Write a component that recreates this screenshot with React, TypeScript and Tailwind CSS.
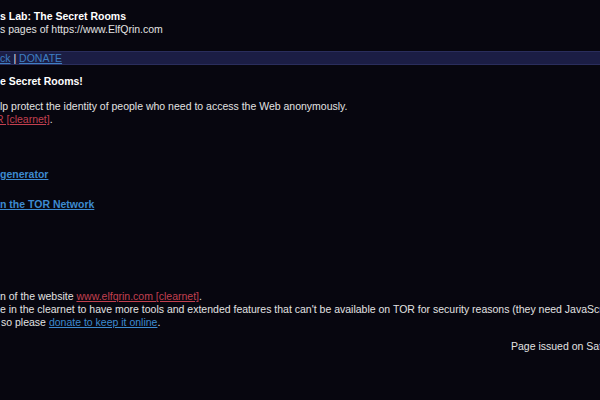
export default function App() {
  const link = 'text-[#3d8ad0] underline';
  const red = 'text-[#c2404f] underline';

  return (
    <div
      className="min-h-screen w-[600px] h-[400px] overflow-hidden bg-[#07060f] text-[#e2e2e2] text-[10.5px] leading-[13px] whitespace-nowrap"
      style={{ fontFamily: '"Liberation Sans", Arial, sans-serif' }}
    >
      {/* Header */}
      <div className="pt-[10px]">
        <div className="font-bold text-white">s Lab: The Secret Rooms</div>
        <div>s pages of https://www.ElfQrin.com</div>
      </div>

      {/* Nav bar */}
      <div className="mt-[15px] h-[14px] border-y border-[#2a2d5c] bg-[#1b1d44] leading-[12px]">
        <a className="text-[#3e7fc2] underline">ck</a> |{' '}
        <a className="text-[#3e7fc2] underline">DONATE</a>
      </div>

      {/* Intro */}
      <div className="mt-[10px] font-bold text-white">e Secret Rooms!</div>
      <div className="mt-[12px]">
        <div>lp protect the identity of people who need to access the Web anonymously.</div>
        <div className="-ml-[4px]">
          <a className={red}>R [clearnet]</a>.
        </div>
      </div>

      {/* Tools */}
      <div className="mt-[42px] font-bold">
        <a className={link}>generator</a>
      </div>
      <div className="mt-[17px] font-bold">
        <a className={link}>n the TOR Network</a>
      </div>

      {/* Footer note */}
      <div className="mt-[79px]">
        <div>
          n of the website <a className={red}>www.elfqrin.com [clearnet]</a>.
        </div>
        <div>
          e in the clearnet to have more tools and extended features that can't be available on TOR for security reasons (they need JavaScript enabled),
        </div>
        <div className="pl-[1px]">
          so please <a className={link}>donate to keep it online</a>.
        </div>
      </div>

      <div className="mt-[11px] pl-[511px]">Page issued on Saturday</div>
    </div>
  );
}
